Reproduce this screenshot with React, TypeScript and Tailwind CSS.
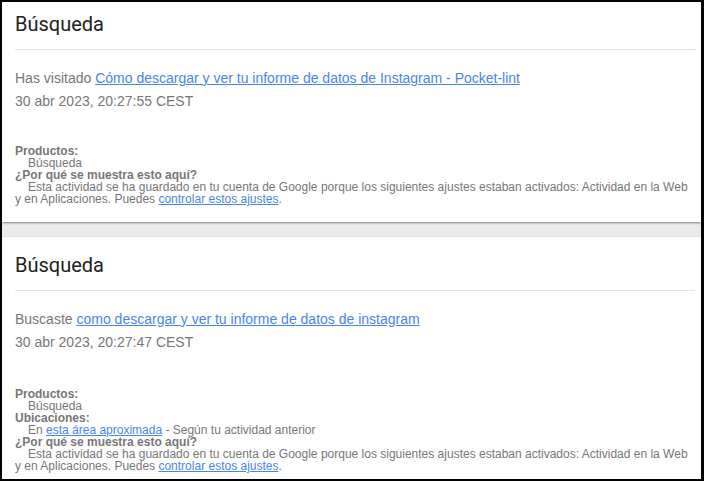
import React from "react";

const gray = "text-[#777777]";

function Detail({ children }: { children: React.ReactNode }) {
  return <div className="pl-[13px]">{children}</div>;
}

function Card({
  top,
  gapTop,
  verb,
  link,
  date,
  location,
}: {
  top: string;
  gapTop: string;
  verb: string;
  link: string;
  date: string;
  location?: boolean;
}) {
  return (
    <div className={`bg-white pl-[13px] pr-[6px] ${top} pb-[17px] shadow-[0_1px_2px_rgba(0,0,0,0.45)]`}>
      <div className="text-[20px] leading-[28px] text-[#212121]" style={{ fontFamily: "Roboto, sans-serif" }}>
        Búsqueda
      </div>
      <div className="mt-[11px] border-b border-[#e3e3e3]" />
      <div className={`${gray} text-[14px]`} style={{ fontFamily: "'Liberation Sans', Arial, sans-serif" }}>
        <div className="mt-[18px] leading-[20px]">
          {verb}{" "}
          <a className="text-[#4a84f0] underline">{link}</a>
        </div>
        <div className="mt-[3px] leading-[20px]">{date}</div>
      </div>
      <div
        className={`${gapTop} text-[12px] leading-[12px] ${gray}`}
        style={{ fontFamily: "'Liberation Sans', Arial, sans-serif" }}
      >
        <div className="font-bold">Productos:</div>
        <Detail>Búsqueda</Detail>
        {location && (
          <>
            <div className="font-bold">Ubicaciones:</div>
            <Detail>
              En <a className="text-[#4a84f0] underline">esta área aproximada</a> - Según tu actividad anterior
            </Detail>
          </>
        )}
        <div className="font-bold">¿Por qué se muestra esto aquí?</div>
        <div>
          <span className="pl-[13px]">
            Esta actividad se ha guardado en tu cuenta de Google porque los siguientes ajustes estaban activados: Actividad en la Web
          </span>
          <br />
          y en Aplicaciones. Puedes <a className="text-[#4a84f0] underline">controlar estos ajustes</a>.
        </div>
      </div>
    </div>
  );
}

export default function App() {
  return (
    <div className="w-[704px] h-[481px] overflow-hidden border-t-2 border-l-2 border-b-2 border-r-[3px] border-black bg-[#ebebeb]">
      <Card
        top="pt-[8px]"
        gapTop="mt-[34px]"
        verb="Has visitado"
        link="Cómo descargar y ver tu informe de datos de Instagram - Pocket-lint"
        date="30 abr 2023, 20:27:55 CEST"
      />
      <div className="h-[15px]" />
      <Card
        top="pt-[14px]"
        gapTop="mt-[36px]"
        verb="Buscaste"
        link="como descargar y ver tu informe de datos de instagram"
        date="30 abr 2023, 20:27:47 CEST"
        location
      />
    </div>
  );
}
